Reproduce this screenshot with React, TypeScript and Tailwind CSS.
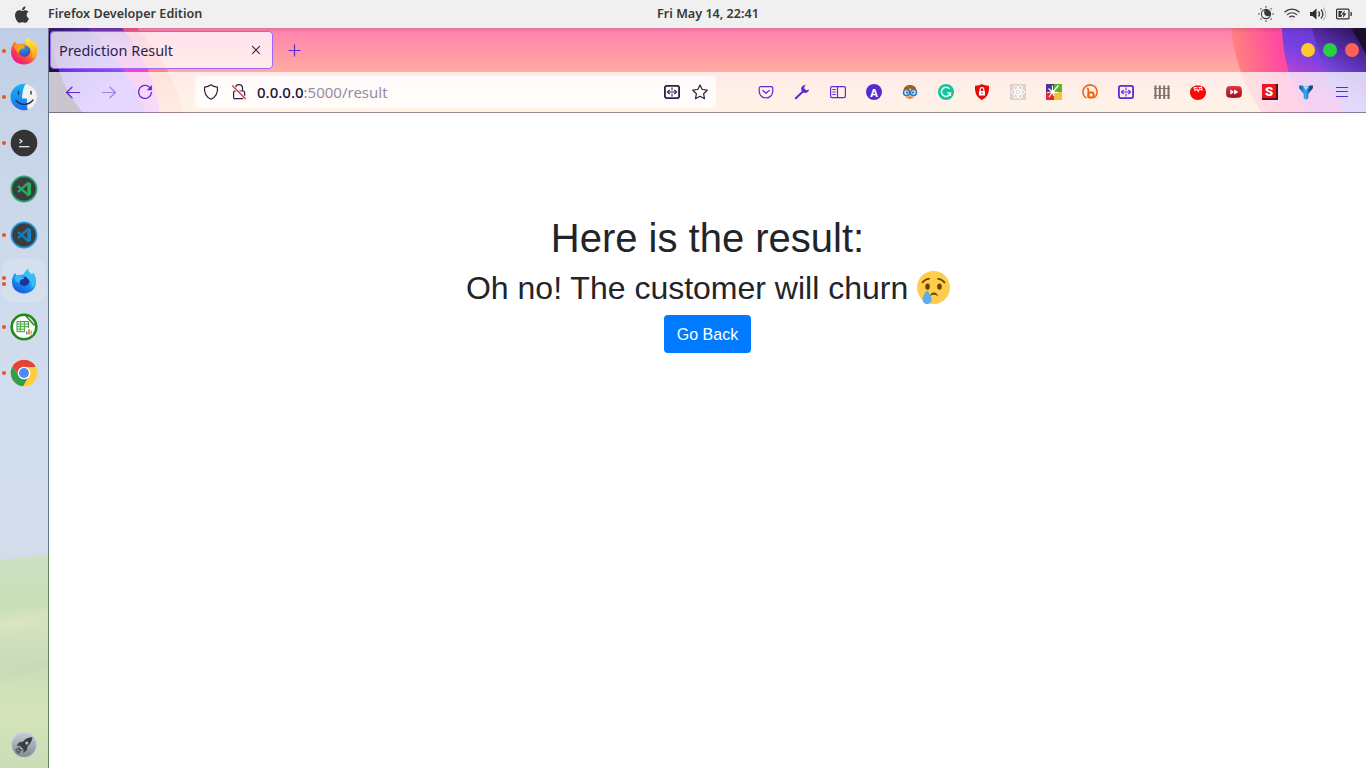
import React from "react";
import { FaApple } from "react-icons/fa";

const UI = "font-['Noto_Sans','Open_Sans',sans-serif]";

function Svg({ s = 16, v = "0 0 16 16", children }: { s?: number; v?: string; children: React.ReactNode }) {
  return (
    <svg width={s} height={s} viewBox={v} fill="none" className="block shrink-0">
      {children}
    </svg>
  );
}

/* ---------- Dock icons ---------- */

function Disc({ children }: { children: React.ReactNode }) {
  return <Svg s={28} v="0 0 28 28">{children}</Svg>;
}

const Firefox = () => (
  <Disc>
    <defs>
      <linearGradient id="ffBody" x1="22" y1="4" x2="6" y2="25" gradientUnits="userSpaceOnUse">
        <stop offset="0" stopColor="#ffe226" />
        <stop offset=".35" stopColor="#ff9a1f" />
        <stop offset=".65" stopColor="#ff4a3f" />
        <stop offset="1" stopColor="#f0138a" />
      </linearGradient>
      <linearGradient id="ffTail" x1="20" y1="0" x2="24" y2="22" gradientUnits="userSpaceOnUse">
        <stop offset="0" stopColor="#fff03e" />
        <stop offset="1" stopColor="#ff9b22" />
      </linearGradient>
      <radialGradient id="ffGlobe" cx=".4" cy=".2" r=".9">
        <stop offset="0" stopColor="#2aa0e8" />
        <stop offset="1" stopColor="#3a3fa8" />
      </radialGradient>
    </defs>
    <path d="M1 15C1 10 3 7 5 4l1.500 3c1.300-.7 3-.8 4.500-.3L15 6c1-3 2.500-5 4-6 0 3 2.600 4.500 4.500 6.500L25 5c1.500 3 2 6 2 9.500C27 22 21.500 27.500 14 27.500S1 22 1 15z" fill="url(#ffBody)" />
    <path d="M19 0c0 3 2.600 4.500 4.500 6.500L25 5c1.500 3 2 6 2 9.500 0 4-2.500 6.500-5.500 7 1-3 1-6-1-9-1.500-2-4-3-5-5.500C15.500 4 17.500 1 19 0z" fill="url(#ffTail)" />
    <circle cx="14.500" cy="14" r="5.800" fill="url(#ffGlobe)" />
    <path d="M4 9c3-2 5-2 7-1l4 1.500c-.5 1.700-2 2.200-4 2.500-.6 1.600-2.500 2-2 4.500L6 14z" fill="#ffa02a" />
  </Disc>
);

const Finder = () => (
  <Disc>
    <defs>
      <linearGradient id="finderBlue" x1="0" y1="0" x2="0" y2="1">
        <stop offset="0" stopColor="#18b4f8" />
        <stop offset="1" stopColor="#1d6ff0" />
      </linearGradient>
    </defs>
    <circle cx="14" cy="14" r="13.300" fill="#f2f2f2" stroke="#c0c7d0" strokeWidth=".6" />
    <path d="M15.500.8A13.300 13.300 0 1 0 17.800 26.700C17 24 16.800 20 17 15.500h-5C12.200 10 13.200 5 15.500.8z" fill="url(#finderBlue)" />
    <path d="M8.500 8.500v2.500M21 8.500v2.500" stroke="#20334a" strokeWidth="1.400" strokeLinecap="round" />
    <path d="M6 17.500c4.500 5.300 12.500 5.300 17-.5" stroke="#20334a" strokeWidth="1.300" strokeLinecap="round" />
  </Disc>
);

const Terminal = () => (
  <Disc>
    <circle cx="14" cy="14" r="13.300" fill="#343434" />
    <path d="M9.500 10.200l2.500 2-2.500 2" stroke="#eee" strokeWidth="1.200" />
    <path d="M9 17.700h10.500" stroke="#f5f5f5" strokeWidth="1.200" />
  </Disc>
);

function Code({ ring, ink }: { ring: string; ink: string }) {
  return (
    <Disc>
      <circle cx="14" cy="14" r="12.600" fill="#3b3e41" stroke={ring} strokeWidth="1.700" />
      <path d="M18 8.200L8 17M18 19.800L8 11" stroke={ink} strokeWidth="2.200" />
      <path d="M17.300 6.500l3.700 1.800v11.400L17.300 21.500z" fill={ink} />
    </Disc>
  );
}

const FirefoxDev = () => (
  <Disc>
    <defs>
      <linearGradient id="fdBody" x1="22" y1="2" x2="8" y2="26" gradientUnits="userSpaceOnUse">
        <stop offset="0" stopColor="#58e4fb" />
        <stop offset=".5" stopColor="#149cf2" />
        <stop offset="1" stopColor="#1a58d8" />
      </linearGradient>
    </defs>
    <path d="M2 15c0-4 1-6.500 3-9l1.500 2.500c1.500-.8 2.500-.7 4-.3L14 7c.7-2.500 2-4 4-5 0 2.500 2 4 3.800 5.500L23.500 6C25.500 9 26 12 26 15c0 6.500-5 11.500-12 11.500S2 21.500 2 15z" fill="url(#fdBody)" />
    <path d="M9.500 14.500c0-2.800 2.300-4.800 5-4.800s4.800 2 4.800 4.600-2 4.600-4.800 4.600-5-1.600-5-4.400z" fill="#22309c" />
    <path d="M4.500 10c2.500-1.500 5-1.500 6.500-.6l3.500 1.400c-.7 1.500-2.500 1.700-4 2.200-.5 1.500-1.500 1.500-1.500 3.500L5.500 14z" fill="#38baf8" />
    <path d="M18 2c0 2.500 2 4 3.800 5.500L23.500 6C25.500 9 26 12 26 15c0 3-2 5-4.500 6 .7-3.500-.5-6-2.300-8C17.500 11 15.500 10 15.200 7 15.500 5 16.500 3 18 2z" fill="#38bdf6" />
  </Disc>
);

const Calc = () => (
  <Disc>
    <circle cx="14" cy="14" r="12.300" fill="#fff" stroke="#238719" strokeWidth="2.600" />
    <path d="M15.500 1l10.500 12-2.500-.5-8-9z" fill="#238719" />
    <path d="M17 3.300c3 1 5.800 3.500 7 7.700z" fill="#b4dfae" />
    <path d="M7 8.500h11.500v10.200H7z" fill="#e0f3dc" stroke="#3d9c35" />
    <path d="M7 11h11.500M7 13.600h11.500M7 16.200h11.500M10.500 8.500v10M14.500 8.500v10" stroke="#4aa842" strokeWidth=".9" />
    <path d="M15 15h7.500v7H15z" fill="#fff" />
    <path d="M16.800 21.500v-3" stroke="#2688e0" strokeWidth="1.500" />
    <path d="M19 21.500V16" stroke="#f06a20" strokeWidth="1.500" />
    <path d="M21.200 21.500v-4" stroke="#f0a520" strokeWidth="1.500" />
  </Disc>
);

const Chrome = () => (
  <Disc>
    <circle cx="14" cy="14" r="13.300" fill="#ffcd40" />
    <path d="M2.500 7.400A13.300 13.300 0 0 1 25.500 7.400L24 8.200H14L8.700 17z" fill="#e54335" />
    <path d="M2.500 7.400A13.300 13.300 0 0 0 13.200 27.300L19.200 17 14 19.500 8.700 17z" fill="#2f9e4f" />
    <path d="M25.500 7.400A13.300 13.300 0 0 1 13.200 27.300L19 17l.5-6L14 8.200h11.800z" fill="#ffcd40" />
    <circle cx="14" cy="14" r="6.300" fill="#fff" />
    <circle cx="14" cy="14" r="5" fill="#4c8bf5" />
  </Disc>
);

const Rocket = () => (
  <Disc>
    <defs>
      <linearGradient id="launch" x1="0" y1="0" x2="0" y2="1">
        <stop offset="0" stopColor="#c5d0d4" />
        <stop offset="1" stopColor="#7c8c91" />
      </linearGradient>
    </defs>
    <circle cx="14" cy="14" r="12.700" fill="url(#launch)" stroke="#d5cddb" strokeWidth="1.300" />
    <path d="M22.500 6c-4 .2-7 1.600-9.300 4.500L9 11.500 6.500 15l3.300-.3L13.500 18.500l-.4 3.500 3.700-2.700.9-4.300c2.800-2.300 4.400-5.200 4.800-9z" fill="#3c4042" />
    <circle cx="16.800" cy="12" r="1.500" fill="#b9c4c8" />
    <path d="M9.500 16.500L5 19.500M11.500 18.500L7.500 23M10 18l-4 4" stroke="#3c4042" strokeWidth="1.300" strokeDasharray="2 .7" />
  </Disc>
);

const dock = [
  { icon: <Firefox />, dots: 1 },
  { icon: <Finder />, dots: 1 },
  { icon: <Terminal />, dots: 1 },
  { icon: <Code ring="#27ae6a" ink="#27ae60" />, dots: 0 },
  { icon: <Code ring="#239bdc" ink="#1580c4" />, dots: 1 },
  { icon: <FirefoxDev />, dots: 2, active: true },
  { icon: <Calc />, dots: 1 },
  { icon: <Chrome />, dots: 1 },
];

function Dock() {
  return (
    <aside className="relative flex w-[49px] shrink-0 flex-col justify-between border-r border-[#64748c] bg-[#cad6e9] pb-[9px]">
      <svg width="48" height="740" viewBox="0 0 48 740" className="absolute top-0 left-0" aria-hidden="true">
        <defs>
          <linearGradient id="sky" x1="0" y1="0" x2="0" y2="1">
            <stop offset="0" stopColor="#c0cee5" />
            <stop offset=".3" stopColor="#cbd8ea" />
            <stop offset=".7" stopColor="#d2deef" />
            <stop offset="1" stopColor="#d2dcea" />
          </linearGradient>
          <linearGradient id="grass" x1="0" y1="0" x2="0" y2="1">
            <stop offset="0" stopColor="#cde1c4" />
            <stop offset=".23" stopColor="#c8e0b9" />
            <stop offset=".33" stopColor="#d5e3bf" />
            <stop offset=".5" stopColor="#c9dcbb" />
            <stop offset=".75" stopColor="#d5e5b9" />
            <stop offset="1" stopColor="#c9ddb4" />
          </linearGradient>
          <filter id="soft" x="-20%" y="-100%" width="140%" height="300%">
            <feGaussianBlur stdDeviation="3" />
          </filter>
        </defs>
        <rect width="48" height="540" fill="url(#sky)" />
        <path d="M0 532Q24 529 48 526V740H0z" fill="url(#grass)" />
        <path d="M0 592Q24 588 48 582V592Q20 600 0 602z" fill="#dbe6c0" opacity=".6" filter="url(#soft)" />
        <path d="M0 645Q24 636 48 634V640Q20 645 0 655z" fill="#bdd2b0" opacity=".3" filter="url(#soft)" />
      </svg>
      <div className="relative flex flex-col">
        {dock.map((d, i) => (
          <div key={i} className="flex h-[46px] items-center">
            <div className={"flex h-[44px] items-center " + (d.active ? "ml-[2px] w-[44px] rounded-[10px] bg-white/15" : "w-full pl-[2px]")}>
              <div className="flex w-[4px] shrink-0 flex-col gap-[2px]">
                {Array.from({ length: d.dots }, (_, n) => (
                  <span key={n} className="size-[4px] rounded-full bg-[#e95420]" />
                ))}
              </div>
              <div className="ml-[4px]">{d.icon}</div>
            </div>
          </div>
        ))}
      </div>
      <div className="relative pl-[10px]"><Rocket /></div>
      <span className="absolute top-[526px] -right-px h-[214px] w-px bg-[#668355]" />
    </aside>
  );
}

/* ---------- Top bar ---------- */

function TopBar() {
  return (
    <header className={"grid h-7 shrink-0 grid-cols-[1fr_auto_1fr] items-center bg-[#f0f0f0] pr-[14px] pl-[14px] text-[12.6px] font-semibold text-[#383838] " + UI}>
      <div className="flex items-center">
        <FaApple size={19} className="w-4 shrink-0" />
        <span className="ml-[18px] whitespace-nowrap">Firefox Developer Edition</span>
      </div>
      <span className="ml-[50px] whitespace-nowrap">Fri May 14, 22:41</span>
      <div className="flex items-center justify-end gap-[10px]">
        <Svg>
          <circle cx="8" cy="8" r="4.600" stroke="#383838" strokeWidth="1.100" />
          <path d="M7 3.500A4.600 4.600 0 0 1 12.500 8.800C11.500 10.500 9 10.800 7.500 9.500 5.800 8 5.800 5.300 7 3.500z" fill="#383838" />
          <path d="M8 0v1.700M8 14.300V16M0 8h1.700M14.300 8H16M2.400 2.400l1.100 1.100M12.500 12.500l1.100 1.100M2.400 13.600l1.100-1.100M12.500 3.500l1.100-1.100" stroke="#777" strokeWidth="1.500" />
        </Svg>
        <Svg>
          <path d="M.5 6.200c4.500-4 10.500-4 15 0M3 8.900c3-2.700 7-2.700 10 0M5.300 11.300c1.700-1.400 3.700-1.400 5.400 0" stroke="#383838" strokeWidth="1.200" />
          <circle cx="8" cy="13.500" r="1" fill="#d4d4d4" />
        </Svg>
        <Svg>
          <path d="M0 6h2.500L6.500 2.500v11L2.500 10H0z" fill="#303030" />
          <path d="M8.500 5.500c1.300 1.500 1.300 3.500 0 5M11 3.500c2.300 2.700 2.300 6.300 0 9" stroke="#383838" strokeWidth="1.300" />
          <path d="M13.300 1.700c3 3.800 3 8.800 0 12.600" stroke="#b8b8b8" strokeWidth="1.200" />
        </Svg>
        <Svg>
          <rect x=".6" y="3.100" width="12.400" height="9.800" rx="1" stroke="#303030" strokeWidth="1.200" />
          <path d="M14.500 6h1.300v4h-1.300z" fill="#303030" />
          <path d="M2.500 5h4L4.200 8.700H6L5.500 11h-3z" fill="#303030" />
          <path d="M8.800 4.500L5.500 8.500h2L6.700 12l3.800-4.500H8.300z" fill="#303030" />
        </Svg>
      </div>
    </header>
  );
}

/* ---------- Browser theme artwork ---------- */

function ThemeArt() {
  return (
    <svg width="1317" height="85" viewBox="49 28 1317 85" className="absolute top-0 left-0" aria-hidden="true">
      <defs>
        <linearGradient id="tPink" x1="0" y1="28" x2="0" y2="113" gradientUnits="userSpaceOnUse">
          <stop offset="0" stopColor="#ff81ad" />
          <stop offset=".5" stopColor="#ffaaa0" />
          <stop offset="1" stopColor="#ffcf9e" />
        </linearGradient>
        <linearGradient id="tViolet" x1="60" y1="28" x2="115" y2="90" gradientUnits="userSpaceOnUse">
          <stop offset="0" stopColor="#3a1a7a" />
          <stop offset=".5" stopColor="#6b3fe0" />
          <stop offset="1" stopColor="#9259ff" />
        </linearGradient>
        <linearGradient id="tMagenta" x1="0" y1="28" x2="0" y2="113" gradientUnits="userSpaceOnUse">
          <stop offset="0" stopColor="#6b35b8" />
          <stop offset=".2" stopColor="#b04ccc" />
          <stop offset=".5" stopColor="#f145c8" />
          <stop offset="1" stopColor="#df67f4" />
        </linearGradient>
        <linearGradient id="tCoral" x1="0" y1="28" x2="0" y2="113" gradientUnits="userSpaceOnUse">
          <stop offset="0" stopColor="#f2568c" />
          <stop offset=".5" stopColor="#ff8775" />
          <stop offset="1" stopColor="#ffaf7a" />
        </linearGradient>
        <linearGradient id="tRight" x1="1230" y1="40" x2="1290" y2="28" gradientUnits="userSpaceOnUse">
          <stop offset="0" stopColor="#ff847c" />
          <stop offset=".75" stopColor="#ff4b9f" />
        </linearGradient>
        <linearGradient id="tViolet2" x1="1290" y1="85" x2="1312" y2="28" gradientUnits="userSpaceOnUse">
          <stop offset="0" stopColor="#cf45cb" />
          <stop offset=".6" stopColor="#7641e4" />
          <stop offset="1" stopColor="#6a37d0" />
        </linearGradient>
        <linearGradient id="tDeep" x1="1322" y1="80" x2="1350" y2="32" gradientUnits="userSpaceOnUse">
          <stop offset="0" stopColor="#8757f5" />
          <stop offset=".5" stopColor="#6035bd" />
          <stop offset="1" stopColor="#35196e" />
        </linearGradient>
        <linearGradient id="topShade" x1="0" y1="28" x2="0" y2="33" gradientUnits="userSpaceOnUse">
          <stop offset="0" stopColor="#40102a" stopOpacity=".14" />
          <stop offset="1" stopColor="#40102a" stopOpacity="0" />
        </linearGradient>
      </defs>
      <rect x="49" y="28" width="1317" height="85" fill="url(#tPink)" />
      <path d="M49 28H137Q172 65 183 113H49z" fill="url(#tCoral)" />
      <path d="M49 28H122Q153 65 160 113H49z" fill="url(#tMagenta)" />
      <path d="M49 28H88Q127 65 146 113H49z" fill="url(#tViolet)" />
      <path d="M49 28Q55 80 83 113H49z" fill="#241338" />
      <path d="M1231 28Q1236 75 1262 113H1366V28z" fill="url(#tRight)" />
      <path d="M1282 28Q1283 72 1306 113H1366V28z" fill="url(#tViolet2)" />
      <path d="M1312 28Q1322 72 1344 113H1366V28z" fill="url(#tDeep)" />
      <path d="M1351 28Q1357 38 1366 54V28z" fill="#1a0e2d" />
      <rect x="49" y="28" width="1317" height="5" fill="url(#topShade)" />
    </svg>
  );
}

/* ---------- Toolbar icons ---------- */

const P = "#5b2bd0";
const D = "#2b2148";

const resize = (c: string) => (
  <Svg>
    <rect x=".9" y="1.900" width="14.200" height="12.200" rx="1.800" stroke={c} strokeWidth="1.800" />
    <path d="M8 3.500v2.800M8 9.700v2.800M4 8h8" stroke={c} strokeWidth="1.100" />
    <path d="M5.600 5.800L3.500 8l2.100 2.200M10.400 5.800L12.500 8l-2.100 2.200" stroke={c} strokeWidth="1.200" />
  </Svg>
);

const tools: React.ReactNode[] = [
  <Svg key="pocket">
    <path d="M2.800 2.600h10.400a1.600 1.600 0 0 1 1.600 1.600v3a6.800 6.800 0 0 1-13.600 0v-3a1.600 1.600 0 0 1 1.600-1.600z" stroke={P} strokeWidth="1.200" />
    <path d="M4.800 6.400L8 9.300l3.200-2.900" stroke={P} strokeWidth="1.200" strokeLinecap="round" strokeLinejoin="round" />
  </Svg>,
  <Svg key="wrench">
    <path d="M1.800 14.200L9 7.600" stroke={P} strokeWidth="2" strokeLinecap="round" />
    <path d="M11.800 1a4 4 0 1 0 3.300 4.400l-2.600.9-2.200-1.500.1-2.300z" fill={P} />
  </Svg>,
  <Svg key="side">
    <rect x=".6" y="2.600" width="14.800" height="11" rx="1.400" stroke={P} strokeWidth="1.200" />
    <path d="M7.500 2.600v11M2.300 5.500h3.400M2.300 8h3.400M2.300 10.500h3.400" stroke={P} strokeWidth="1.200" />
  </Svg>,
  <span key="a" className="flex size-4 items-center justify-center rounded-full bg-[#592acb] font-['Open_Sans',sans-serif] text-[11px] leading-none font-bold text-white">A</span>,
  <Svg key="face">
    <path d="M1.500 9C1 3 4 1 8 1s7 2 6.500 8z" fill="#9c6420" />
    <path d="M2.700 7c3-.2 4.500-1.500 5.500-3 1 1.500 3.300 2.300 5 3v4c-1 3-3 4.200-5.600 4.200S3.500 14 2.700 11z" fill="#f2b184" />
    <circle cx="4.500" cy="8.600" r="3" fill="#cfefff" stroke="#277cc4" strokeWidth="1.500" />
    <circle cx="11.500" cy="8.600" r="3" fill="#cfefff" stroke="#277cc4" strokeWidth="1.500" />
    <circle cx="5" cy="8.600" r="1" fill="#204a78" />
    <circle cx="11" cy="8.600" r="1" fill="#204a78" />
    <path d="M6.500 13.400h3" stroke="#c85545" />
  </Svg>,
  <Svg key="gram">
    <circle cx="8" cy="8" r="8" fill="#15c39a" />
    <path d="M11.500 4.800A4.600 4.600 0 1 0 12.500 9H9.200M12.400 8.500v3.500" stroke="#e7fff7" strokeWidth="1.500" />
  </Svg>,
  <Svg key="shield">
    <path d="M8 0c2 1.300 4.500 1.800 7 1.700C15.300 8 14 13 8 16 2 13 .7 8 1 1.700 3.500 1.800 6 1.300 8 0z" fill="#e30b0b" />
    <path d="M5 7h6v4.500H5z" fill="#fff" />
    <path d="M6.200 7V5.500a1.800 1.800 0 0 1 3.600 0V7" stroke="#fff" strokeWidth="1.200" />
    <path d="M8 8.300v1.700" stroke="#e30b0b" />
  </Svg>,
  <Svg key="react">
    <path d="M0 0h16v16H0z" fill="#ded1ca" />
    <g stroke="#fff" strokeWidth="1">
      <ellipse cx="8" cy="8" rx="6.800" ry="2.600" />
      <ellipse cx="8" cy="8" rx="6.800" ry="2.600" transform="rotate(60 8 8)" />
      <ellipse cx="8" cy="8" rx="6.800" ry="2.600" transform="rotate(120 8 8)" />
    </g>
    <circle cx="8" cy="8" r="1.300" fill="#fff" />
  </Svg>,
  <Svg key="color">
    <path d="M0 0h8v8H0z" fill="#4a3295" />
    <path d="M8 0h8v8H8z" fill="#5eb52b" />
    <path d="M0 8h8v8H0z" fill="#e22a3d" />
    <path d="M8 8h8v8H8z" fill="#f3c13d" />
    <path d="M6.500 8L2.500 4.500M6.500 8L6.500 1.500M6.500 8L12.500 1.500M6.500 8L12 8.500M6.500 8L1 8.500M6.500 8L3 13M6.500 8L8 12" stroke="#fff" strokeWidth="1.200" />
    <circle cx="6.700" cy="8" r="2" fill="#fff" />
  </Svg>,
  <Svg key="bit">
    <path d="M4.300 14A7.100 7.100 0 1 1 11.700 14" stroke="#f0640f" strokeWidth="1.600" />
    <path d="M5 4c1.200.3 1.400 1.200 1.400 3V14" stroke="#f0640f" strokeWidth="1.800" />
    <circle cx="9" cy="11" r="2.700" stroke="#f0640f" strokeWidth="2" />
  </Svg>,
  <React.Fragment key="resize">{resize(P)}</React.Fragment>,
  <Svg key="fence">
    <path d="M0 4.500h16M0 11.500h16" stroke="#8b817b" strokeWidth="1.200" />
    <path d="M1.500 15V1.500M5.800 15V1.500M10.200 15V1.500M14.500 15V1.500" stroke="#77706b" strokeWidth="2" />
  </Svg>,
  <Svg key="tomato">
    <path d="M8 2.500C13 .8 16 4.200 16 8.500S12.500 16 8 16 0 12.800 0 8.500 3 .8 8 2.500z" fill="#fc0707" />
    <path d="M8 3.500L4 3.800 5 6.500 7 5l1.300 2.500L9.500 5l2.500 1-.5-2.700z" stroke="#fff2eb" strokeWidth="1.100" />
    <path d="M8 4V1M5.500 1.200L8 3l2.500-1.800" stroke="#ee1515" />
  </Svg>,
  <Svg key="ff">
    <defs>
      <linearGradient id="redPill" x1="0" y1="0" x2="0" y2="1">
        <stop stopColor="#df3542" />
        <stop offset="1" stopColor="#9d1018" />
      </linearGradient>
    </defs>
    <path d="M2.500 2.300Q8 1.500 13.500 2.300 15.500 2.500 15.700 5q.5 3 0 6-.2 2.300-2.200 2.600-5.500.8-11 0Q.5 13.300.3 11q-.5-3 0-6 .2-2.400 2.200-2.700z" fill="url(#redPill)" />
    <path d="M4.300 5.300L8 8l-3.700 2.700zM8.200 5.300L12.200 8l-4 2.700z" fill="#fff" />
  </Svg>,
  <span key="s" className="size-4 bg-[#610b13]">
    <span className="flex size-[14px] items-center justify-center bg-[#ea1723] font-['Roboto',sans-serif] text-[13px] leading-none font-black text-white">S</span>
  </span>,
  <Svg key="funnel">
    <defs>
      <linearGradient id="blueY" x1="0" y1="0" x2="1" y2="0">
        <stop stopColor="#174f92" />
        <stop offset=".25" stopColor="#2387dc" />
        <stop offset=".48" stopColor="#3cacf2" />
        <stop offset=".7" stopColor="#1a68b5" />
        <stop offset="1" stopColor="#0c2b50" />
      </linearGradient>
    </defs>
    <path d="M1.200 1.500h3l2 .8h3.600l2-.8h3v2.800L10.300 10v4.300L8 15.700l-2.300-1.400V10L1.200 4.300z" fill="url(#blueY)" />
    <path d="M5 2.500h6L8 6z" fill="#aee6ff" />
  </Svg>,
  <Svg key="menu">
    <path d="M2 3.500h12M2 7.500h12M2 12.500h12" stroke={P} strokeWidth="1" />
  </Svg>,
];

function Nav({ children }: { children: React.ReactNode }) {
  return <div className="flex w-9 shrink-0 items-center justify-center">{children}</div>;
}

function Browser() {
  return (
    <div className="relative h-[85px] shrink-0 overflow-hidden">
      <ThemeArt />
      <div className="relative flex h-11 items-center pr-[7px] pl-px">
        <div className={"flex h-[38px] w-[223px] items-center justify-between rounded-[4px] border border-[#9c66ff] bg-white/77 pr-[11px] pl-[8px] text-[14.4px] text-[#2b1e4a] " + UI}>
          <span className="pt-[2px] whitespace-nowrap">Prediction Result</span>
          <Svg s={10} v="0 0 10 10">
            <path d="M1.200 1.200l7.600 7.600M8.800 1.200l-7.600 7.600" stroke={D} strokeWidth="1.100" />
          </Svg>
        </div>
        <div className="ml-[15px]">
          <Svg s={13} v="0 0 13 13">
            <path d="M6.500.5v12M.5 6.500h12" stroke={P} strokeWidth="1.200" />
          </Svg>
        </div>
        <div className="ml-auto flex gap-2">
          <span className="size-[14px] rounded-full bg-[#ffc92e]" />
          <span className="size-[14px] rounded-full bg-[#28d043]" />
          <span className="size-[14px] rounded-full bg-[#ff6058]" />
        </div>
      </div>
      <div className="relative flex h-[41px] items-stretch border-b border-[#1b0826]/45 bg-white/76 pr-[6px] pl-[6px]">
        <Nav>
          <Svg>
            <path d="M14.500 8.500H1.500M7 3.200L1.500 8.500 7 13.800" stroke={P} strokeWidth="1.200" strokeLinecap="round" strokeLinejoin="round" />
          </Svg>
        </Nav>
        <Nav>
          <Svg>
            <path d="M1.500 8.500h13M9 3.200l5.500 5.300L9 13.800" stroke={P} strokeOpacity=".5" strokeWidth="1.200" strokeLinecap="round" strokeLinejoin="round" />
          </Svg>
        </Nav>
        <Nav>
          <Svg>
            <path d="M13.600 4.500A6.500 6.500 0 1 0 14.500 8.500" stroke={P} strokeWidth="1.300" strokeLinecap="round" />
            <path d="M14.900 1v5.200H9.700z" fill={P} />
          </Svg>
        </Nav>
        <div className="mt-1 ml-[32px] flex h-8 w-[521px] shrink-0 items-center rounded-[4px] bg-white/78 px-2">
          <Svg>
            <path d="M8 .8c1.800 1.400 4 2.100 6.500 2.300C15 9 13 13 8 15.300 3 13 1 9 1.500 3.100 4 2.900 6.200 2.200 8 .8z" stroke={D} strokeWidth="1.200" strokeLinejoin="round" />
          </Svg>
          <div className="ml-3">
            <Svg>
              <path d="M4.500 7V4.200a3.500 3.500 0 0 1 7 0V7M3.800 7h8.600a1.200 1.200 0 0 1 1.200 1.200v5.300a1.200 1.200 0 0 1-1.200 1.200H3.800a1.200 1.200 0 0 1-1.200-1.200V8.200A1.200 1.200 0 0 1 3.800 7z" stroke={D} strokeWidth="1.200" />
              <path d="M1.200 1.500l13.500 13.500" stroke="#fff8f4" strokeWidth="3" />
              <path d="M1.200 1.500l13.500 13.500" stroke="#e22850" strokeWidth="1.300" />
            </Svg>
          </div>
          <span className={"ml-[10px] text-[15px] whitespace-nowrap text-[#968ca5] " + UI}>
            <span className="font-medium text-[#21123f]">0.0.0.0</span>:5000/result
          </span>
          <div className="ml-auto flex gap-3">
            {resize(D)}
            <Svg>
              <path d="M8 .9l2.200 4.600 5 .7-3.600 3.500.9 5L8 12.300l-4.500 2.400.9-5L.8 6.200l5-.7z" stroke={D} strokeWidth="1.200" strokeLinejoin="round" />
            </Svg>
          </div>
        </div>
        <div className="ml-auto flex">
          {tools.map((t, i) => (
            <Nav key={i}>{t}</Nav>
          ))}
        </div>
      </div>
    </div>
  );
}

function CryingFace() {
  return (
    <svg width="33" height="33" viewBox="0 0 36 36" className="-mt-px block shrink-0" role="img" aria-label="Crying face">
      <circle cx="18" cy="18" r="18" fill="#ffcc4d" />
      <ellipse cx="11.500" cy="17" rx="2.500" ry="3.500" fill="#664500" />
      <ellipse cx="24.500" cy="17" rx="2.500" ry="3.500" fill="#664500" />
      <path d="M5.999 13.500a1 1 0 0 1-.799-1.600c3.262-4.350 7.616-4.400 7.800-4.400a1 1 0 0 1 .004 2c-.155.002-3.568.086-6.204 3.600a.998.998 0 0 1-.801.400zm24.002 0a.998.998 0 0 1-.801-.4c-2.641-3.521-6.061-3.599-6.206-3.600a1.002 1.002 0 0 1-.991-1.005A.997.997 0 0 1 23 7.500c.184 0 4.537.050 7.800 4.400a1 1 0 0 1-.799 1.600z" fill="#664500" />
      <path d="M14 28c.5-3 2.300-4.600 4.500-4.600S22.500 25 23 28c-1.200-1.300-2.800-2-4.500-2S15.200 26.700 14 28z" fill="#664500" />
      <path d="M16 31c0 2.762-2.238 5-5 5s-5-2.238-5-5c0-2.500 3.500-9.500 5-9.500s5 7 5 9.500z" fill="#5dadec" />
    </svg>
  );
}

export default function App() {
  return (
    <div className="flex h-screen flex-col overflow-hidden bg-white">
      <TopBar />
      <div className="flex min-h-0 flex-1">
        <Dock />
        <div className="flex min-w-0 flex-1 flex-col">
          <Browser />
          <main className="flex flex-1 flex-col items-center bg-white pt-[100.6px] font-['Liberation_Sans',Arial,sans-serif] text-[#212529]">
            <h1 className="mb-[7px] text-[40px] leading-[1.2] font-medium">Here is the result:</h1>
            <h2 className="mb-2 flex items-center gap-[8.6px] pl-[0.8px] text-[32px] leading-[1.2] font-medium">
              <span>Oh no! The customer will churn</span>
              <CryingFace />
            </h2>
            <button className="h-[38px] rounded-[4px] bg-[#007bff] px-[13px] pt-[2px] text-base text-white">Go Back</button>
          </main>
        </div>
      </div>
    </div>
  );
}
